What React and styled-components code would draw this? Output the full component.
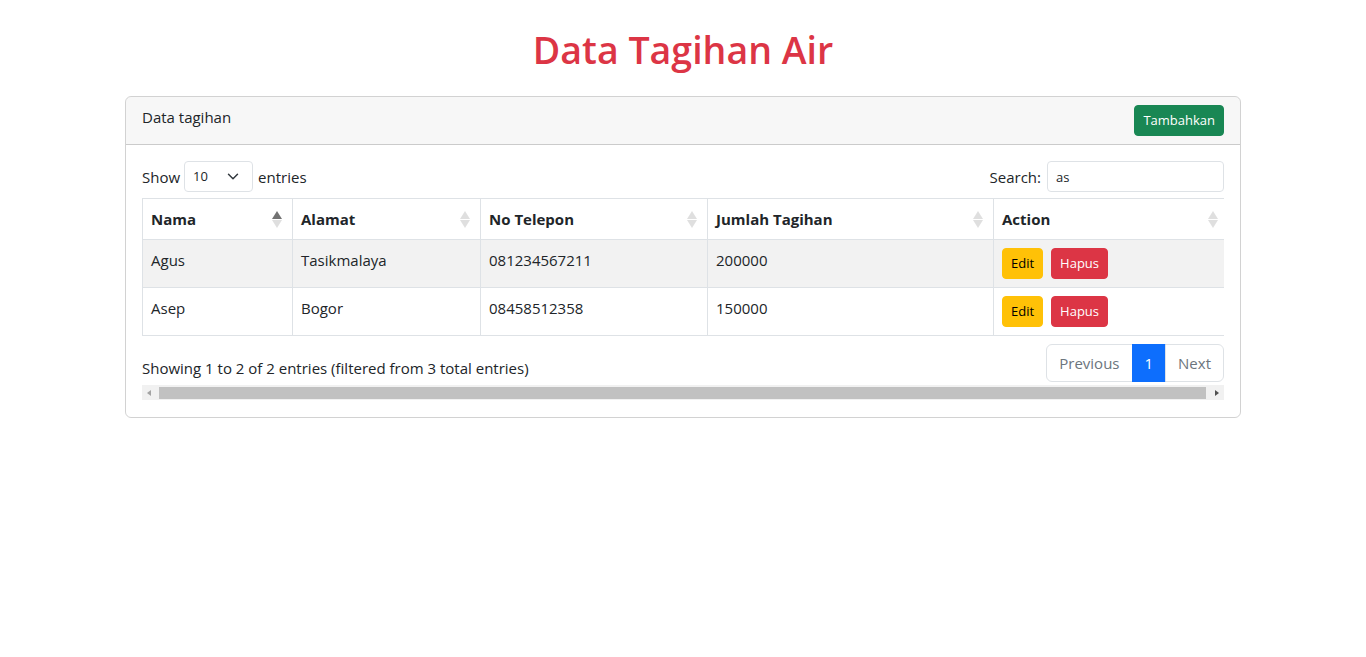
import styled, { createGlobalStyle } from 'styled-components'

const GlobalStyle = createGlobalStyle`
  body {
    margin: 0;
    font-family: "Segoe UI", "Open Sans", sans-serif;
    font-size: 15px;
    line-height: 24px;
    color: #212529;
    background: #fff;
  }
  * { box-sizing: border-box; }
`

const Page = styled.div`
  max-width: 1140px;
  margin: 0 auto;
  padding: 26px 12px 0;
`

const Title = styled.h1`
  margin: 0 0 22px;
  text-align: center;
  font-size: 37.5px;
  line-height: 48px;
  font-weight: 600;
  color: #dc3545;
`

const Card = styled.div`
  border: 1px solid rgba(0, 0, 0, 0.175);
  border-radius: 6px;
  overflow: hidden;
`

const CardHeader = styled.div`
  display: flex;
  justify-content: space-between;
  align-items: flex-start;
  padding: 8px 16px;
  background: rgba(0, 0, 0, 0.03);
  border-bottom: 1px solid rgba(0, 0, 0, 0.175);
`

const CardBody = styled.div`
  padding: 16px 16px 17px;
`

const Btn = styled.button`
  font-family: inherit;
  font-size: 13px;
  line-height: 21px;
  padding: 4px 8px;
  border: 1px solid ${({ $bg }) => $bg};
  border-radius: 4px;
  background: ${({ $bg }) => $bg};
  color: ${({ $fg }) => $fg || '#fff'};
  cursor: pointer;
  & + & {
    margin-left: 8px;
  }
`

const Scroller = styled.div`
  overflow: hidden;
`

const Inner = styled.div`
  width: 1086px;
`

const ScrollBar = styled.div`
  display: flex;
  align-items: center;
  height: 15px;
  margin-top: 1px;
  background: #f1f1f1;
`

const ScrollButton = styled.div`
  width: 15px;
  height: 15px;
  display: flex;
  align-items: center;
  justify-content: center;
  flex-shrink: 0;
`

const Arrow = styled.span`
  width: 0;
  height: 0;
  border-top: 3.5px solid transparent;
  border-bottom: 3.5px solid transparent;
  ${({ $dir, $color }) =>
    $dir === 'left'
      ? `border-right: 4px solid ${$color}; margin-left: -1px;`
      : `border-left: 4px solid ${$color}; margin-left: 1px;`}
`

const Thumb = styled.div`
  flex: 1;
  height: 12px;
  margin: 0 3px 0 2px;
  background: #c1c1c1;
`

const TopRow = styled.div`
  display: flex;
  justify-content: space-between;
  align-items: center;
  width: 1082px;
`

const Label = styled.label`
  display: flex;
  align-items: center;
  white-space: nowrap;
`

const SelectWrap = styled.span`
  position: relative;
  display: inline-block;
  margin: 0 5px 0 4px;
`

const Select = styled.select`
  appearance: none;
  font-family: inherit;
  font-size: 13px;
  line-height: 21px;
  width: 69px;
  height: 31px;
  padding: 4px 36px 4px 8px;
  border: 1px solid #dee2e6;
  border-radius: 4px;
  background: #fff;
  color: #212529;
`

const Chevron = styled.svg`
  position: absolute;
  right: 14px;
  top: 11px;
  pointer-events: none;
`

const SearchInput = styled.input`
  font-family: inherit;
  font-size: 13px;
  line-height: 21px;
  width: 177px;
  height: 31px;
  margin-left: 6px;
  padding: 4px 8px;
  border: 1px solid #dee2e6;
  border-radius: 4px;
  color: #212529;
  &::-webkit-search-cancel-button {
    display: none;
  }
`

const Table = styled.table`
  width: 1086px;
  margin: 6px 0;
  border-collapse: collapse;
  table-layout: fixed;
`

const Th = styled.th`
  width: ${({ $w }) => $w}px;
  padding: 8px 10px 8px 8px;
  border: 1px solid #dee2e6;
  text-align: left;
  font-weight: 700;
  vertical-align: middle;
`

const ThInner = styled.div`
  display: flex;
  justify-content: space-between;
  align-items: center;
`

const Tr = styled.tr`
  background: ${({ $striped }) => ($striped ? '#f2f2f2' : '#fff')};
`

const Td = styled.td`
  padding: 8px;
  border: 1px solid #dee2e6;
  vertical-align: top;
`

const BottomRow = styled.div`
  display: flex;
  justify-content: space-between;
  align-items: flex-start;
  width: 1082px;
`

const Info = styled.div`
  padding-top: 13.6px;
  white-space: nowrap;
`

const Pagination = styled.ul`
  display: flex;
  list-style: none;
  margin: 2px 0;
  padding: 0;
`

const PageLink = styled.li`
  padding: 6px 12px;
  border: 1px solid ${({ $active }) => ($active ? '#0d6efd' : '#dee2e6')};
  background: ${({ $active }) => ($active ? '#0d6efd' : '#fff')};
  color: ${({ $active }) => ($active ? '#fff' : '#6c757d')};
  & + & {
    margin-left: -1px;
  }
  &:first-child {
    border-radius: 6px 0 0 6px;
  }
  &:last-child {
    border-radius: 0 6px 6px 0;
  }
`

const SortIcon = ({ active }) => (
  <svg width="10" height="17" viewBox="0 0 10 17">
    <path d="M5 0 L10 8 L0 8 Z" fill="#000" opacity={active ? 0.55 : 0.125} />
    <path d="M5 17 L10 9 L0 9 Z" fill="#000" opacity={0.125} />
  </svg>
)

const columns = [
  { label: 'Nama', width: 150, active: true },
  { label: 'Alamat', width: 188 },
  { label: 'No Telepon', width: 227 },
  { label: 'Jumlah Tagihan', width: 286 },
  { label: 'Action', width: 235 },
]

const rows = [
  { nama: 'Agus', alamat: 'Tasikmalaya', telp: '081234567211', jumlah: '200000' },
  { nama: 'Asep', alamat: 'Bogor', telp: '08458512358', jumlah: '150000' },
]

const App = () => {
  return (
    <>
      <GlobalStyle />
      <Page>
        <Title>Data Tagihan Air</Title>
        <Card>
          <CardHeader>
            <span>Data tagihan</span>
            <Btn $bg="#198754">Tambahkan</Btn>
          </CardHeader>
          <CardBody>
            <Scroller>
              <Inner>
                <TopRow>
                  <Label>
                    Show
                    <SelectWrap>
                      <Select defaultValue="10">
                        <option value="10">10</option>
                        <option value="25">25</option>
                        <option value="50">50</option>
                        <option value="100">100</option>
                      </Select>
                      <Chevron width="12" height="9" viewBox="0 0 16 12">
                        <path d="M2 3l6 6 6-6" fill="none" stroke="#343a40" strokeWidth="2" strokeLinecap="round" strokeLinejoin="round" />
                      </Chevron>
                    </SelectWrap>
                    entries
                  </Label>
                  <Label>
                    Search:
                    <SearchInput type="search" defaultValue="as" />
                  </Label>
                </TopRow>
                <Table>
                  <thead>
                    <tr>
                      {columns.map((c) => (
                        <Th key={c.label} $w={c.width}>
                          <ThInner>
                            {c.label}
                            <SortIcon active={c.active} />
                          </ThInner>
                        </Th>
                      ))}
                    </tr>
                  </thead>
                  <tbody>
                    {rows.map((r, i) => (
                      <Tr key={r.nama} $striped={i % 2 === 0}>
                        <Td>{r.nama}</Td>
                        <Td>{r.alamat}</Td>
                        <Td>{r.telp}</Td>
                        <Td>{r.jumlah}</Td>
                        <Td>
                          <Btn $bg="#ffc107" $fg="#000">Edit</Btn>
                          <Btn $bg="#dc3545">Hapus</Btn>
                        </Td>
                      </Tr>
                    ))}
                  </tbody>
                </Table>
                <BottomRow>
                  <Info>Showing 1 to 2 of 2 entries (filtered from 3 total entries)</Info>
                  <Pagination>
                    <PageLink>Previous</PageLink>
                    <PageLink $active>1</PageLink>
                    <PageLink>Next</PageLink>
                  </Pagination>
                </BottomRow>
              </Inner>
            </Scroller>
            <ScrollBar>
              <ScrollButton>
                <Arrow $dir="left" $color="#a3a3a3" />
              </ScrollButton>
              <Thumb />
              <ScrollButton>
                <Arrow $dir="right" $color="#505050" />
              </ScrollButton>
            </ScrollBar>
          </CardBody>
        </Card>
      </Page>
    </>
  )
}

export default App
